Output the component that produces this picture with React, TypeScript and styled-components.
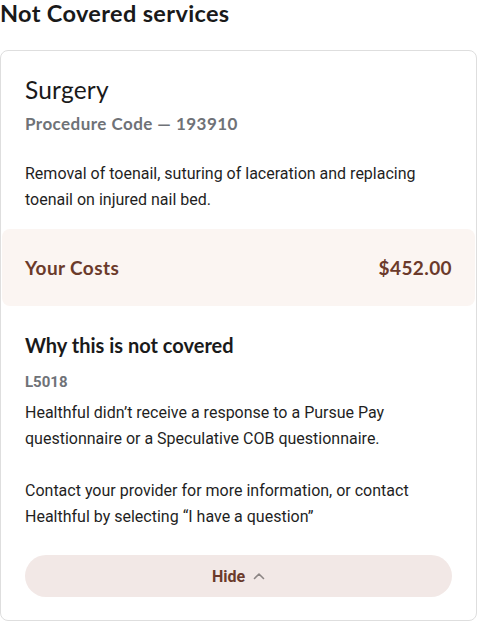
import React from "react";
import styled, { createGlobalStyle } from "styled-components";

const Global = createGlobalStyle`
  html, body { margin: 0; padding: 0; background: #ffffff; }
  body { font-family: Roboto, "Liberation Sans", sans-serif; color: #1f1f1f; }
  * { box-sizing: border-box; }
`;

const heading = `"Lato", "Noto Sans", sans-serif`;

const Page = styled.div`
  width: 478px;
`;

const Title = styled.h2`
  margin: 0;
  font-family: ${heading};
  font-size: 23.5px;
  letter-spacing: 0.35px;
  line-height: 26px;
  font-weight: 700;
  color: #1a1a1a;
`;

const Card = styled.section`
  margin-top: 24px;
  border: 1px solid #dedede;
  border-radius: 8px;
  padding: 24px 0 23px;
  width: 477px;
`;

const Inner = styled.div`
  padding: 0 24px;
`;

const ServiceName = styled.div`
  font-family: ${heading};
  font-size: 24.5px;
  letter-spacing: 0.2px;
  line-height: 30px;
  font-weight: 400;
  color: #1a1a1a;
`;

const Code = styled.div`
  margin-top: 7px;
  font-family: ${heading};
  font-size: 17px;
  letter-spacing: 0.45px;
  line-height: 24px;
  font-weight: 700;
  color: #6f7277;
`;

const Text = styled.p<{ $top?: number }>`
  margin: ${(p) => p.$top ?? 0}px 0 0;
  font-family: Roboto, "Liberation Sans", sans-serif;
  font-size: 16px;
  line-height: 26px;
  color: #1f1f1f;
`;

const CostBand = styled.div`
  margin: 16px 1px 0;
  height: 77px;
  padding: 0 23px;
  background: #fbf5f2;
  border-radius: 8px;
  display: flex;
  align-items: center;
  justify-content: space-between;
  font-family: ${heading};
  font-size: 19px;
  letter-spacing: 0.4px;
  font-weight: 700;
  color: #6b3a2b;
`;

const Why = styled.h3`
  margin: 25px 0 0;
  font-family: ${heading};
  font-size: 20px;
  line-height: 28px;
  font-weight: 700;
  color: #1a1a1a;
`;

const Reason = styled.div`
  margin-top: 12px;
  font-family: Roboto, "Liberation Sans", sans-serif;
  font-size: 15px;
  line-height: 22px;
  font-weight: 700;
  color: #6f7277;
`;

const HideButton = styled.button`
  margin-top: 25px;
  width: 100%;
  height: 42px;
  border: none;
  border-radius: 21px;
  background: #f2e8e6;
  display: flex;
  align-items: center;
  justify-content: center;
  gap: 8px;
  font-family: Roboto, "Liberation Sans", sans-serif;
  font-size: 16px;
  font-weight: 700;
  color: #6b3a2b;
  cursor: pointer;
`;

const Chevron = () => (
  <svg width="12" height="8" viewBox="0 0 12 8" fill="none">
    <path d="M1.5 6.5 L6 2 L10.5 6.5" stroke="#8c8584" strokeWidth="1.6" strokeLinecap="round" strokeLinejoin="round" />
  </svg>
);

export default function App() {
  return (
    <Page>
      <Global />
      <Title>Not Covered services</Title>
      <Card>
        <Inner>
          <ServiceName>Surgery</ServiceName>
          <Code>Procedure Code — 193910</Code>
          <Text $top={25}>
            Removal of toenail, suturing of laceration and replacing toenail on injured nail bed.
          </Text>
        </Inner>
        <CostBand>
          <span>Your Costs</span>
          <span>$452.00</span>
        </CostBand>
        <Inner>
          <Why>Why this is not covered</Why>
          <Reason>L5018</Reason>
          <Text $top={7}>
            Healthful didn’t receive a response to a Pursue Pay questionnaire or a Speculative COB questionnaire.
          </Text>
          <Text $top={26}>
            Contact your provider for more information, or contact Healthful by selecting “I have a question”
          </Text>
          <HideButton>
            Hide <Chevron />
          </HideButton>
        </Inner>
      </Card>
    </Page>
  );
}
